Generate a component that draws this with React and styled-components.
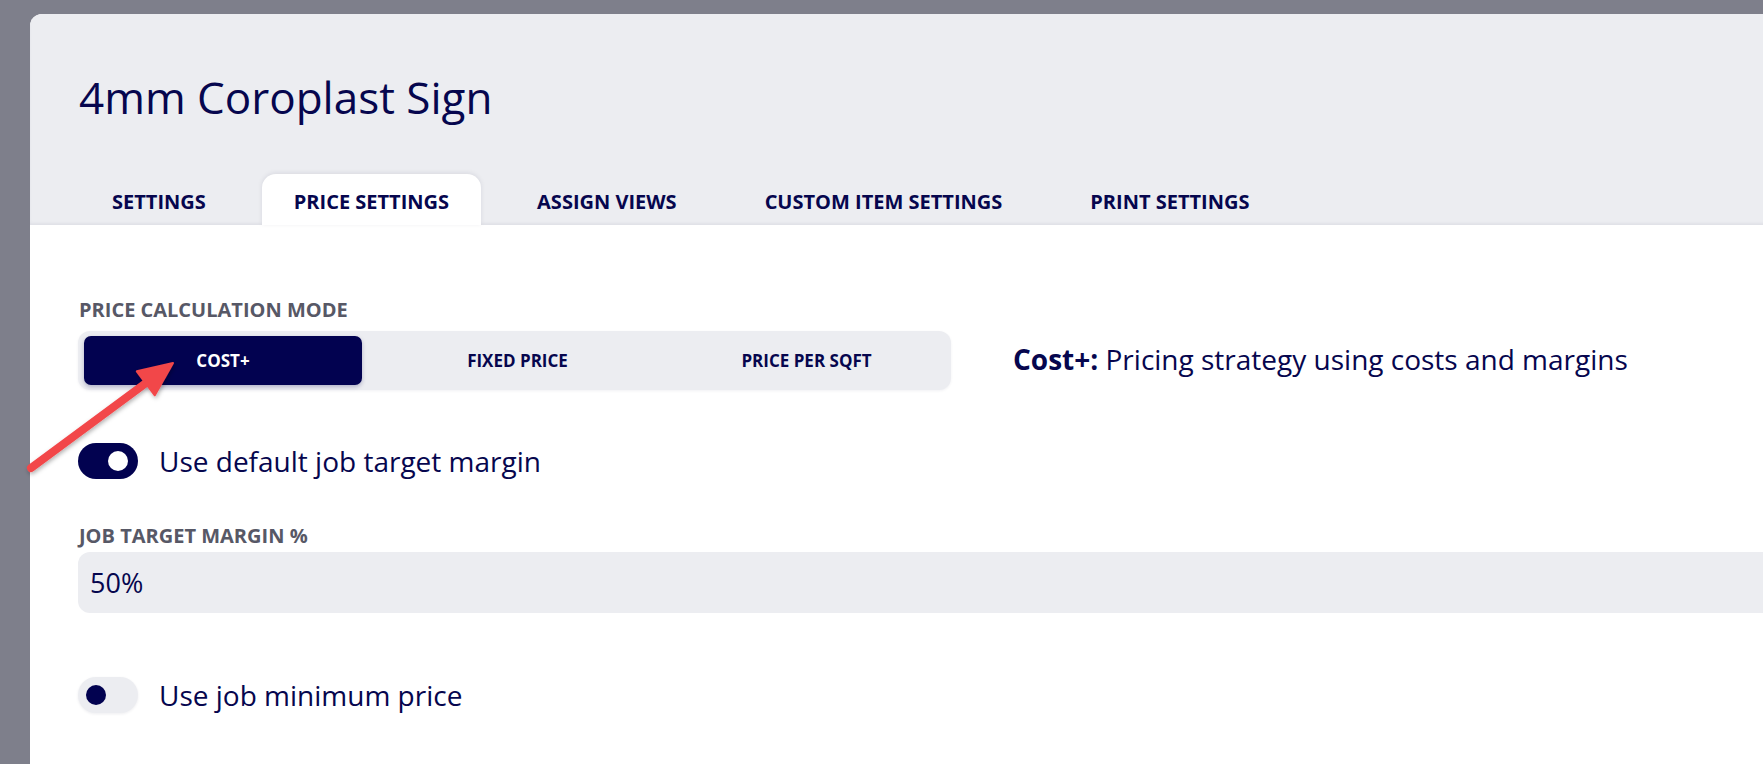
import React from 'react';
import styled, { createGlobalStyle } from 'styled-components';

const Global = createGlobalStyle`
  html, body { margin: 0; padding: 0; background: #7e7f8b; overflow: hidden; }
  body { font-family: "Open Sans", "Noto Sans", sans-serif; color: #06064e; }
  * { box-sizing: border-box; }
`;

const Page = styled.div`
  position: relative;
  width: 1763px;
  height: 764px;
  padding: 14px 0 0 30px;
  overflow: hidden;
`;

const Card = styled.div`
  width: calc(100% + 40px);
  height: 800px;
  background: #ffffff;
  border-radius: 12px 0 0 0;
  overflow: hidden;
`;

const Header = styled.header`
  background: #ecedf1;
  padding: 53px 0 0 49px;
  box-shadow: inset 0 -2px 3px rgba(20, 20, 60, 0.05);
`;

const Title = styled.h1`
  margin: 0 0 47px;
  font-size: 44px;
  line-height: 60px;
  font-weight: 400;
  color: #06064e;
`;

const TabBar = styled.nav`
  display: flex;
  gap: 24px;
  margin-left: 1px;
`;

const Tab = styled.div`
  height: 51px;
  padding: 4px 32px 0;
  display: flex;
  align-items: center;
  font-size: 20px;
  font-weight: 700;
  text-transform: uppercase;
  color: #06064e;
  border-radius: 14px 14px 0 0;
  background: ${p => (p.$active ? '#ffffff' : 'transparent')};
  box-shadow: ${p => (p.$active ? '0 -1px 5px rgba(20, 20, 60, 0.09)' : 'none')};
`;

const Body = styled.section`
  padding: 74px 0 0 48px;
`;

const FieldLabel = styled.div`
  font-size: 20px;
  line-height: 22px;
  font-weight: 700;
  text-transform: uppercase;
  color: #575866;
  margin: ${p => p.$top || 0}px 0 ${p => p.$bottom || 0}px 1px;
`;

const ModeRow = styled.div`
  display: flex;
  align-items: center;
  gap: 62px;
`;

const Segmented = styled.div`
  width: 873px;
  height: 59px;
  padding: 5px 0 5px 6px;
  background: #ecedf1;
  border-radius: 12px;
  display: grid;
  grid-template-columns: repeat(3, 1fr);
  box-shadow: 0 1px 3px rgba(20, 20, 60, 0.06);
`;

const Segment = styled.div`
  display: flex;
  align-items: center;
  justify-content: center;
  width: ${p => (p.$active ? '278px' : 'auto')};
  border-radius: 7px;
  font-size: 17px;
  font-weight: 700;
  text-transform: uppercase;
  color: ${p => (p.$active ? '#ffffff' : '#06064e')};
  background: ${p => (p.$active ? '#020250' : 'transparent')};
  box-shadow: ${p => (p.$active ? '0 2px 4px rgba(2, 2, 80, 0.25)' : 'none')};
`;

const Description = styled.p`
  margin: 0 0 4px;
  font-size: 28px;
  line-height: 36px;
  color: #06064e;
  b { font-weight: 700; }
`;

const ToggleRow = styled.label`
  display: flex;
  align-items: center;
  gap: 21px;
  margin-top: ${p => p.$top}px;
  font-size: 28px;
  line-height: 36px;
  color: #06064e;
`;

const Switch = styled.span`
  position: relative;
  display: block;
  width: 60px;
  height: 36px;
  border-radius: 18px;
  background: ${p => (p.$on ? '#020250' : '#ecedf1')};
  box-shadow: ${p => (p.$on ? 'none' : '0 1px 3px rgba(20, 20, 60, 0.08)')};
`;

const Knob = styled.span`
  position: absolute;
  top: 8px;
  left: ${p => (p.$on ? '30px' : '8px')};
  width: 20px;
  height: 20px;
  border-radius: 50%;
  background: ${p => (p.$on ? '#ffffff' : '#020250')};
`;

const Input = styled.div`
  height: 61px;
  padding-left: 12px;
  display: flex;
  align-items: center;
  background: #ecedf1;
  border-radius: 12px 0 0 12px;
  font-size: 27px;
  color: #06064e;
`;

const Arrow = styled.svg`
  position: absolute;
  left: 0;
  top: 0;
  width: 220px;
  height: 520px;
  pointer-events: none;
  overflow: visible;
`;

const tabs = ['Settings', 'Price Settings', 'Assign Views', 'Custom Item Settings', 'Print Settings'];
const modes = ['Cost+', 'Fixed Price', 'Price per sqft'];

export default function App() {
  return (
    <>
      <Global />
      <Page>
        <Card>
          <Header>
            <Title>4mm Coroplast Sign</Title>
            <TabBar>
              {tabs.map(t => (
                <Tab key={t} $active={t === 'Price Settings'}>{t}</Tab>
              ))}
            </TabBar>
          </Header>
          <Body>
            <FieldLabel $bottom={10}>Price calculation mode</FieldLabel>
            <ModeRow>
              <Segmented>
                {modes.map(m => (
                  <Segment key={m} $active={m === 'Cost+'}>{m}</Segment>
                ))}
              </Segmented>
              <Description><b>Cost+:</b> Pricing strategy using costs and margins</Description>
            </ModeRow>
            <ToggleRow $top={53}>
              <Switch $on><Knob $on /></Switch>
              Use default job target margin
            </ToggleRow>
            <FieldLabel $top={46} $bottom={5}>Job target margin %</FieldLabel>
            <Input>50%</Input>
            <ToggleRow $top={64}>
              <Switch><Knob /></Switch>
              Use job minimum price
            </ToggleRow>
          </Body>
        </Card>
        <Arrow viewBox="0 0 220 520">
          <defs>
            <filter id="arrowShadow" x="-20%" y="-20%" width="140%" height="140%">
              <feDropShadow dx="1" dy="2" stdDeviation="2" floodColor="#000" floodOpacity="0.3" />
            </filter>
          </defs>
          <g filter="url(#arrowShadow)" fill="#f2474a" stroke="#f2474a">
            <line x1="31" y1="468" x2="150" y2="380" strokeWidth="8" strokeLinecap="round" />
            <polygon points="173,363 154.8,395.3 136.8,371.3" strokeWidth="2" strokeLinejoin="round" />
          </g>
        </Arrow>
      </Page>
    </>
  );
}
